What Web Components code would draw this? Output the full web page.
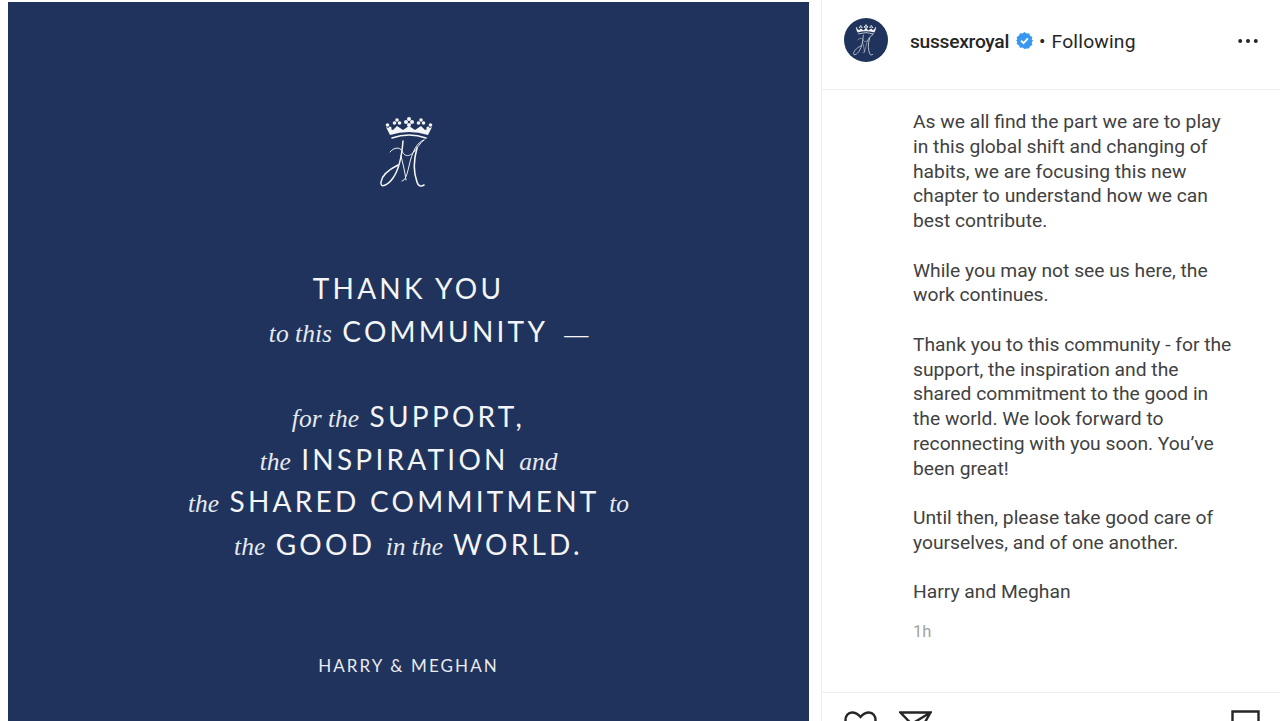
<!DOCTYPE html>
<html lang="en">
<head>
<meta charset="utf-8">
<title>sussexroyal</title>
<style>
    html, body { margin: 0; height: 721px; overflow: hidden; background: #fff; }
</style>
</head>
<body>
<post-view>
    <post-artwork slot="art">
        <monogram-logo slot="logo" size="100"></monogram-logo>
        <art-line>THANK YOU</art-line>
        <art-line><i>to this</i> COMMUNITY<b>—</b></art-line>
        <art-line></art-line>
        <art-line><i>for the</i> SUPPORT,</art-line>
        <art-line><i>the</i> INSPIRATION <i>and</i></art-line>
        <art-line><i>the</i> SHARED COMMITMENT <i>to</i></art-line>
        <art-line><i>the</i> GOOD <i>in the</i> WORLD.</art-line>
        <span slot="sign">HARRY &amp; MEGHAN</span>
    </post-artwork>
    <post-panel slot="panel">
        <post-header name="sussexroyal"></post-header>
        <post-caption time="1h">
            <p>As we all find the part we are to play
in this global shift and changing of
habits, we are focusing this new
chapter to understand how we can
best contribute.</p>
            <p>While you may not see us here, the
work continues.</p>
            <p>Thank you to this community - for the
support, the inspiration and the
shared commitment to the good in
the world. We look forward to
reconnecting with you soon. You’ve
been great!</p>
            <p>Until then, please take good care of
yourselves, and of one another.</p>
            <p>Harry and Meghan</p>
        </post-caption>
        <post-actions></post-actions>
    </post-panel>
</post-view>

<script>
class MonogramLogo extends HTMLElement {
    connectedCallback() {
        const s = this.getAttribute("size") || 100;
        this.attachShadow({ mode: "open" }).innerHTML = `
            <style>
                :host { display: block; width: ${s}px; height: ${s}px; }
                svg { display: block; width: 100%; height: 100%; }
            </style>
            <svg viewBox="0 0 100 100" fill="none" stroke="#f4f5f7" stroke-linecap="round">
                <g fill="#f4f5f7" stroke="none">
                    <path d="M31 33 L27 25 L34 28 L38 24 L44 28 L50 24 L56 28 L62 24 L66 28 L73 25 L69 33 Q50 27 31 33Z"/>
                    <circle cx="50" cy="17" r="2"/><circle cx="47" cy="20" r="2"/><circle cx="53" cy="20" r="2"/><circle cx="50" cy="23" r="2"/>
                    <circle cx="38" cy="18" r="1.8"/><circle cx="35.500" cy="21" r="1.8"/><circle cx="40.500" cy="21" r="1.8"/>
                    <circle cx="62" cy="18" r="1.8"/><circle cx="59.500" cy="21" r="1.8"/><circle cx="64.500" cy="21" r="1.8"/>
                    <circle cx="28.500" cy="23" r="1.8"/><circle cx="71.500" cy="23" r="1.8"/><circle cx="31" cy="26" r="1.6"/><circle cx="69" cy="26" r="1.6"/>
                </g>
                <path d="M33 36 Q50 30 67 36" stroke-width="1.6"/>
                <path d="M44 39 C43 52 41 66 34 76 C29 83 21 87 22 80 C23 73 31 67 39 63" stroke-width="1.5"/>
                <path d="M31 50 C35 45 41 45 43 49 C46 56 52 55 58 46 C61 42 63 39 65 38" stroke-width="1"/>
                <path d="M65 38 C58 40 53 50 50 64 C48 73 46 79 43 79" stroke-width="1"/>
                <path d="M58 46 C54 60 55 72 58 80 C59 84 62 85 65 83" stroke-width="1.6"/>
                <path d="M42 54 C44 62 46 70 47 78" stroke-width="1"/>
            </svg>`;
    }
}

class ArtLine extends HTMLElement {
    constructor() {
        super();
        this.attachShadow({ mode: "open" }).innerHTML = `
            <style>
                :host {
                    display: block;
                    height: 42.7px;
                    line-height: 42.7px;
                    text-align: center;
                    white-space: nowrap;
                    font-family: "Lato", sans-serif;
                    font-size: 28px;
                    letter-spacing: 3.25px;
                    color: #f4f5f7;
                }
                ::slotted(i) {
                    font-family: "Liberation Serif", serif;
                    font-style: italic;
                    font-size: 25.5px;
                    letter-spacing: 0;
                    color: #e6e9ef;
                }
                ::slotted(b) {
                    display: inline-block;
                    width: 40px;
                    margin-right: -40px;
                    font-family: "Liberation Serif", serif;
                    font-weight: 400;
                    font-size: 24px;
                    letter-spacing: 0;
                    text-align: right;
                }
            </style>
            <slot></slot>`;
    }
}

class PostArtwork extends HTMLElement {
    constructor() {
        super();
        this.attachShadow({ mode: "open" }).innerHTML = `
            <style>
                :host {
                    display: flex;
                    flex-direction: column;
                    align-items: center;
                    box-sizing: border-box;
                    width: 801px;
                    height: 801px;
                    padding-top: 100px;
                    background: #1f335c;
                }
                .lines { align-self: stretch; margin-top: 65px; }
                .sign {
                    margin-top: 88px;
                    font-family: "Lato", sans-serif;
                    font-size: 17px;
                    line-height: 24px;
                    letter-spacing: 2.1px;
                    color: #e8ebf0;
                }
            </style>
            <slot name="logo"></slot>
            <div class="lines"><slot></slot></div>
            <div class="sign"><slot name="sign"></slot></div>`;
    }
}

class PostHeader extends HTMLElement {
    connectedCallback() {
        this.attachShadow({ mode: "open" }).innerHTML = `
            <style>
                :host {
                    display: flex;
                    align-items: center;
                    box-sizing: border-box;
                    height: 90px;
                    padding: 0 22px 9px 22px;
                    border-bottom: 1px solid #efefef;
                    font-family: "Roboto", sans-serif;
                    font-size: 19.25px;
                    color: #262626;
                }
                .avatar {
                    display: flex;
                    align-items: center;
                    justify-content: center;
                    flex: none;
                    width: 44px;
                    height: 44px;
                    border-radius: 50%;
                    overflow: hidden;
                    background: #1f335c;
                }
                .name { margin: 2px 0 0 22px; font-weight: 500; letter-spacing: -0.3px; }
                .badge { margin-left: 7px; width: 17px; height: 17px; display: block; }
                .dot { margin: 2px 6px 0 6px; }
                .state { margin-top: 2px; letter-spacing: 0.2px; }
                .more { margin: 2px 0 0 auto; width: 20px; height: 4px; display: block; }
            </style>
            <div class="avatar"><monogram-logo size="46"></monogram-logo></div>
            <span class="name">${this.getAttribute("name")}</span>
            <svg class="badge" viewBox="0 0 18 18">
                <path fill="#3897f0" d="M9 0l2.200 1.600 2.700-.2 1 2.500 2.400 1.300-.6 2.700L18 9l-1.300 2.100.6 2.700-2.400 1.300-1 2.500-2.700-.2L9 18l-2.200-1.600-2.700.2-1-2.500L.7 12.800l.6-2.700L0 9l1.300-1.100-.6-2.700 2.400-1.300 1-2.500 2.700.2z"/>
                <path fill="none" stroke="#fff" stroke-width="2" d="M5.400 9.200l2.600 2.600 4.600-5"/>
            </svg>
            <span class="dot">•</span>
            <span class="state">Following</span>
            <svg class="more" viewBox="0 0 20 4" fill="#262626">
                <circle cx="2.200" cy="2" r="2"/><circle cx="10" cy="2" r="2"/><circle cx="17.800" cy="2" r="2"/>
            </svg>`;
    }
}

class PostCaption extends HTMLElement {
    connectedCallback() {
        this.attachShadow({ mode: "open" }).innerHTML = `
            <style>
                :host {
                    display: block;
                    box-sizing: border-box;
                    height: 602px;
                    padding: 20px 30px 0 91px;
                    font-family: "Roboto", sans-serif;
                    font-size: 19.25px;
                    line-height: 24.75px;
                    color: #414141;
                }
                ::slotted(p) { margin: 0 0 24.75px; white-space: pre-line; }
                .time { margin-top: -10px; font-size: 16.5px; color: #a3a3a3; }
            </style>
            <slot></slot>
            <div class="time">${this.getAttribute("time")}</div>`;
    }
}

class PostActions extends HTMLElement {
    constructor() {
        super();
        this.attachShadow({ mode: "open" }).innerHTML = `
            <style>
                :host {
                    display: flex;
                    align-items: flex-start;
                    height: 60px;
                    padding: 18px 20px 0 22px;
                    border-top: 1px solid #efefef;
                }
                svg { display: block; fill: none; stroke: #262626; stroke-width: 2.4; }
                .heart { width: 33px; height: 30px; }
                .send { width: 33px; height: 30px; margin-left: 22px; }
                .save { width: 29px; height: 34px; margin-left: auto; margin-top: -1px; }
            </style>
            <svg class="heart" viewBox="0 0 33 30"><path d="M16.500 6C14 3 11 1.500 8 1.500 4 1.500 1.500 5 1.500 9c0 7 8 13 15 19 7-6 15-12 15-19 0-4-2.500-7.500-6.500-7.500-3 0-6 1.500-8.500 4.500z"/></svg>
            <svg class="send" viewBox="0 0 33 30"><path d="M1.500 1.500h30L12.500 13z M12.500 13l4 15L31.500 1.500"/></svg>
            <svg class="save" viewBox="0 0 29 34"><path d="M1.500 1.500h26v31L14.500 21 1.500 32.500z"/></svg>`;
    }
}

class PostPanel extends HTMLElement {
    constructor() {
        super();
        this.attachShadow({ mode: "open" }).innerHTML = `
            <style>
                :host { display: block; flex: 1; min-width: 0; border-left: 1px solid #efefef; margin-top: -2px; }
            </style>
            <slot></slot>`;
    }
}

class PostView extends HTMLElement {
    constructor() {
        super();
        this.attachShadow({ mode: "open" }).innerHTML = `
            <style>
                :host { display: flex; gap: 12px; padding: 2px 0 0 8px; }
            </style>
            <slot name="art"></slot>
            <slot name="panel"></slot>`;
    }
}

customElements.define("monogram-logo", MonogramLogo);
customElements.define("art-line", ArtLine);
customElements.define("post-artwork", PostArtwork);
customElements.define("post-header", PostHeader);
customElements.define("post-caption", PostCaption);
customElements.define("post-actions", PostActions);
customElements.define("post-panel", PostPanel);
customElements.define("post-view", PostView);
</script>
</body>
</html>
